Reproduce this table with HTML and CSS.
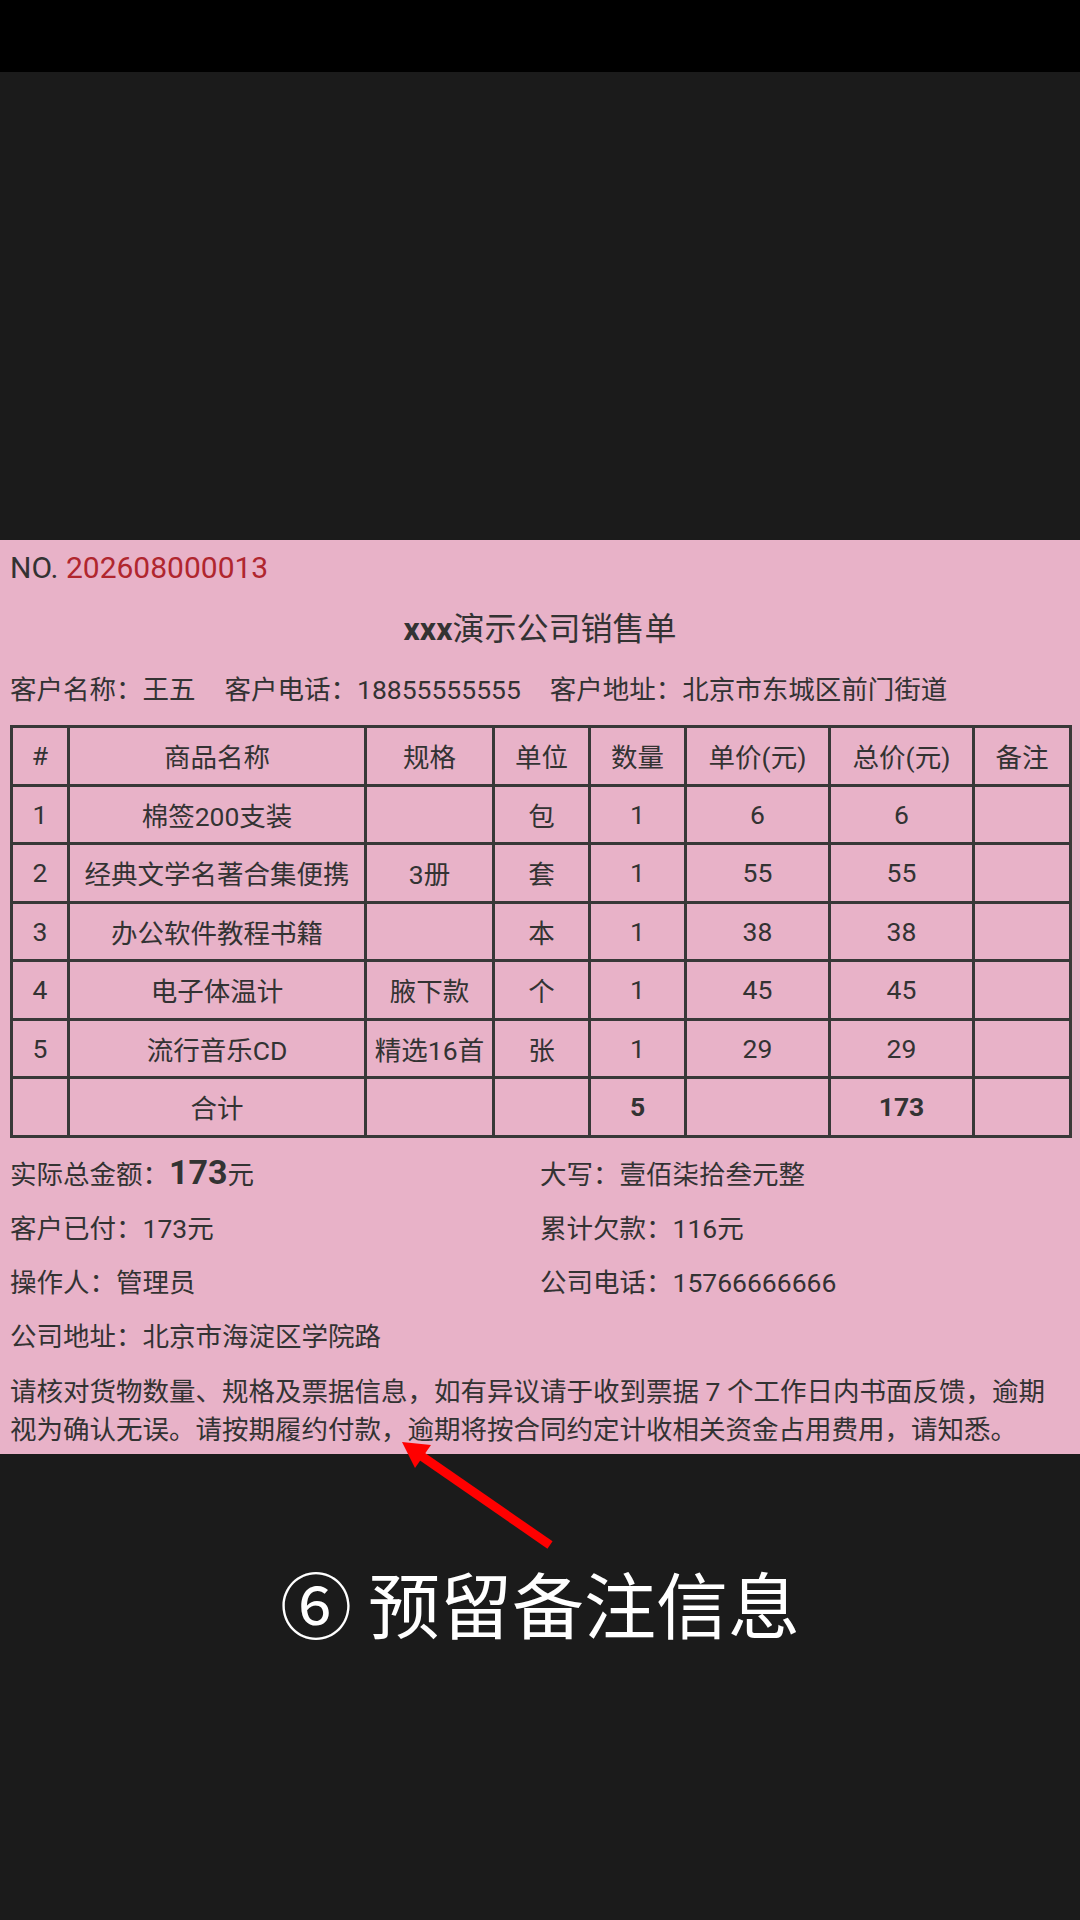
FILE: index.html
```html
<!DOCTYPE html>
<html lang="zh-CN">
<head>
<meta charset="utf-8">
<title>销售单</title>
<link rel="stylesheet" href="styles.css">
</head>
<body>
<div class="statusbar"></div>
<main class="viewer">
  <section class="receipt">
    <div class="no">NO. <span class="no-num">202608000013</span></div>
    <h1 class="title"><b>xxx</b>演示公司销售单</h1>
    <div class="customer">
      <span>客户名称：王五</span>
      <span>客户电话：18855555555</span>
      <span>客户地址：北京市东城区前门街道</span>
    </div>
    <table class="items">
      <colgroup>
        <col class="c-idx"><col class="c-name"><col class="c-spec"><col class="c-unit">
        <col class="c-qty"><col class="c-price"><col class="c-total"><col class="c-note">
      </colgroup>
      <thead>
        <tr><th>#</th><th>商品名称</th><th>规格</th><th>单位</th><th>数量</th><th>单价(元)</th><th>总价(元)</th><th>备注</th></tr>
      </thead>
      <tbody>
        <tr><td>1</td><td>棉签200支装</td><td></td><td>包</td><td>1</td><td>6</td><td>6</td><td></td></tr>
        <tr><td>2</td><td>经典文学名著合集便携</td><td>3册</td><td>套</td><td>1</td><td>55</td><td>55</td><td></td></tr>
        <tr><td>3</td><td>办公软件教程书籍</td><td></td><td>本</td><td>1</td><td>38</td><td>38</td><td></td></tr>
        <tr><td>4</td><td>电子体温计</td><td>腋下款</td><td>个</td><td>1</td><td>45</td><td>45</td><td></td></tr>
        <tr><td>5</td><td>流行音乐CD</td><td>精选16首</td><td>张</td><td>1</td><td>29</td><td>29</td><td></td></tr>
        <tr><td></td><td>合计</td><td></td><td></td><td class="bold">5</td><td></td><td class="bold">173</td><td></td></tr>
      </tbody>
    </table>
    <div class="info">
      <div class="cell">实际总金额：<span class="amount">173</span>元</div>
      <div class="cell">大写：壹佰柒拾叁元整</div>
      <div class="cell">客户已付：173元</div>
      <div class="cell">累计欠款：116元</div>
      <div class="cell">操作人：管理员</div>
      <div class="cell">公司电话：15766666666</div>
      <div class="cell">公司地址：北京市海淀区学院路</div>
    </div>
    <p class="notice">请核对货物数量、规格及票据信息，如有异议请于收到票据 7 个工作日内书面反馈，逾期视为确认无误。请按期履约付款，逾期将按合同约定计收相关资金占用费用，请知悉。</p>
  </section>
  <svg class="arrow" width="190" height="130" viewBox="0 0 190 130" aria-hidden="true">
    <line x1="170" y1="115" x2="40" y2="25" stroke="#ff0000" stroke-width="9"/>
    <polygon points="22,12 51,15 35,38" fill="#ff0000"/>
  </svg>
  <div class="caption">⑥ 预留备注信息</div>
</main>
</body>
</html>
```
FILE: styles.css
```css
html, body {
  margin: 0;
  padding: 0;
}
body {
  width: 1080px;
  height: 1920px;
  background: #1b1b1b;
  font-family: Roboto, "Noto Sans CJK SC", sans-serif;
  overflow: hidden;
}
.statusbar {
  height: 72px;
  background: #000;
}
.viewer {
  position: relative;
  padding-top: 468px;
}
.receipt {
  background: #e8b2c8;
  color: #333;
  padding: 0 10px 5px;
  font-size: 26.5px;
}
.no {
  font-size: 30px;
  line-height: 55px;
  height: 55px;
}
.no-num {
  color: #b0262e;
}
.title {
  margin: 0;
  font-size: 32px;
  font-weight: 400;
  text-align: center;
  line-height: 68px;
  height: 68px;
}
.title b {
  font-weight: 700;
}
.customer {
  display: flex;
  gap: 29px;
  line-height: 54px;
  height: 54px;
  margin-bottom: 8px;
}
.items {
  width: 100%;
  border-collapse: collapse;
  table-layout: fixed;
  font-size: 26.5px;
}
.items th,
.items td {
  border: 3px solid #383838;
  text-align: center;
  font-weight: 400;
  padding: 0;
  height: 55.5px;
  white-space: nowrap;
}
.items td.bold {
  font-weight: 700;
}
.c-idx { width: 57px; }
.c-name { width: 297px; }
.c-spec { width: 128px; }
.c-unit { width: 96px; }
.c-qty { width: 96px; }
.c-price { width: 144px; }
.c-total { width: 144px; }
.c-note { width: 97px; }
.info {
  display: grid;
  grid-template-columns: 1fr 1fr;
  margin-top: 10px;
}
.info .cell {
  height: 54px;
  line-height: 54px;
}
.amount {
  font-size: 34px;
  font-weight: 700;
  line-height: 1;
}
.notice {
  margin: 9px 0 0;
  line-height: 38px;
}
.arrow {
  position: absolute;
  left: 380px;
  top: 1358px;
}
.caption {
  margin-top: 98px;
  text-align: center;
  color: #fff;
  font-family: "Noto Sans CJK SC", sans-serif;
  font-size: 72px;
  line-height: 100px;
}
```
